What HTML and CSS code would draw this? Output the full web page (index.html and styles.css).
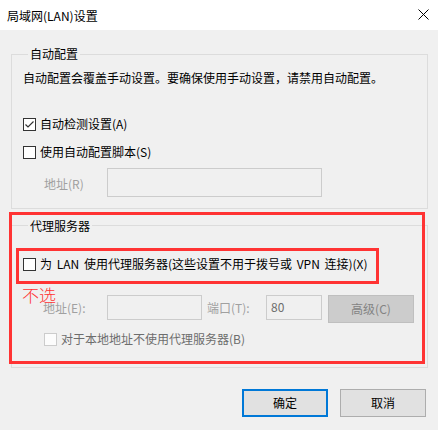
FILE: index.html
```html
<!DOCTYPE html>
<html lang="zh-CN">
<head>
<meta charset="utf-8">
<title>局域网(LAN)设置</title>
<link rel="stylesheet" href="styles.css">
</head>
<body>
<div class="dialog">
  <div class="titlebar">
    <span class="title">局域网(LAN)设置</span>
    <svg class="close" width="11" height="11" viewBox="0 0 11 11"><path d="M0.5 0.5L10.5 10.5M10.5 0.5L0.5 10.5" stroke="#000" stroke-width="1" fill="none"/></svg>
  </div>
  <div class="main">
    <fieldset class="group group-auto">
      <legend>自动配置</legend>
      <p class="desc">自动配置会覆盖手动设置。要确保使用手动设置，请禁用自动配置。</p>
      <div class="check-row">
        <span class="cb checked"><svg width="11" height="11" viewBox="0 0 11 11"><path d="M1.5 5.5L4 8L9.5 2.5" stroke="#333" stroke-width="1.2" fill="none"/></svg></span>
        <span>自动检测设置(A)</span>
      </div>
      <div class="check-row row-script">
        <span class="cb"></span>
        <span>使用自动配置脚本(S)</span>
      </div>
      <div class="addr-row">
        <span class="dim-label addr-label">地址(R)</span>
        <span class="input input-script"></span>
      </div>
    </fieldset>
    <fieldset class="group group-proxy">
      <legend>代理服务器</legend>
      <div class="mark-box">
        <div class="check-row">
          <span class="cb"></span>
          <span class="wide-words">为 LAN 使用代理服务器(这些设置不用于拨号或 VPN 连接)(X)</span>
        </div>
      </div>
      <div class="proxy-row">
        <span class="dim-label proxy-addr-label">地址(E):</span>
        <span class="input input-addr"></span>
        <span class="dim-label port-label">端口(T):</span>
        <span class="input input-port">80</span>
        <span class="btn btn-disabled">高级(C)</span>
      </div>
      <div class="check-row row-bypass disabled">
        <span class="cb cb-disabled"></span>
        <span>对于本地地址不使用代理服务器(B)</span>
      </div>
    </fieldset>
    <div class="footer">
      <span class="btn btn-default">确定</span>
      <span class="btn">取消</span>
    </div>
  </div>
  <div class="annot-frame"></div>
  <div class="annot-text">不选</div>
</div>
</body>
</html>
```
FILE: styles.css
```css
html, body {
  margin: 0;
  padding: 0;
}
body {
  background: #f0f0f0;
  font-family: "Noto Sans CJK SC", "Microsoft YaHei", sans-serif;
  font-size: 12px;
  line-height: 16px;
  color: #000;
}
.dialog {
  position: relative;
  width: 438px;
  height: 430px;
  overflow: hidden;
}
.titlebar {
  height: 30px;
  background: #fff;
  display: flex;
  align-items: center;
  justify-content: space-between;
  padding: 0 9px 0 7px;
  box-sizing: border-box;
}
.title {
  padding-top: 2px;
}
.close {
  display: block;
  margin-top: -1px;
}
.main {
  padding: 16px 10px 0 11px;
}
.group {
  margin: 0;
  border: 1px solid #dcdcdc;
  padding: 8px 10px 11px 11px;
  min-width: 0;
}
.group legend {
  padding: 0 2px;
  margin-left: 5px;
  line-height: 16px;
}
.group-proxy legend {
  line-height: 18px;
  padding-top: 2px;
}
.desc {
  margin: 0 0 30px 0;
}
.check-row {
  display: flex;
  align-items: center;
  gap: 4px;
  height: 16px;
}
.wide-words {
  word-spacing: 2px;
}
.row-script {
  margin-top: 12px;
}
.cb {
  width: 13px;
  height: 13px;
  box-sizing: border-box;
  border: 1px solid #333;
  background: #fff;
  display: flex;
  align-items: center;
  justify-content: center;
  flex: none;
}
.cb svg {
  display: block;
}
.cb-disabled {
  border-color: #cccccc;
  background: #fcfcfc;
}
.disabled {
  color: #6d6d6d;
}
.dim-label {
  color: #a0a0a0;
}
.addr-row {
  display: flex;
  align-items: center;
  margin-top: 8px;
}
.addr-label {
  margin-left: 21px;
  width: 63px;
  padding-top: 3px;
}
.input {
  box-sizing: border-box;
  border: 1px solid #cccccc;
  background: #f0f0f0;
  display: block;
}
.input-script {
  width: 215px;
  height: 29px;
}
.group-proxy {
  margin-top: 6px;
  padding: 13px 10px 20px 11px;
}
.mark-box {
  margin-left: -7px;
  width: 363px;
  height: 36px;
  box-sizing: border-box;
  border: 3px solid #ff3333;
  padding: 5px 0 0 4px;
}
.proxy-row {
  display: flex;
  align-items: flex-start;
  margin-top: 11px;
}
.proxy-row .dim-label {
  line-height: 25px;
}
.proxy-addr-label {
  margin-left: 20px;
  width: 64px;
}
.input-addr {
  width: 95px;
  height: 25px;
  margin-right: 5px;
}
.port-label {
  width: 59px;
}
.input-port {
  width: 56px;
  height: 25px;
  padding: 3px 0 0 4px;
  color: #6d6d6d;
  line-height: 16px;
}
.btn {
  box-sizing: border-box;
  width: 86px;
  height: 28px;
  border: 1px solid #adadad;
  background: #e1e1e1;
  display: flex;
  align-items: center;
  justify-content: center;
}
.btn-disabled {
  margin-left: 6px;
  background: #cccccc;
  border-color: #bfbfbf;
  color: #838383;
}
.row-bypass {
  margin-top: 8px;
  padding-left: 21px;
}
.footer {
  display: flex;
  justify-content: flex-end;
  gap: 12px;
  margin-top: 21px;
  padding-right: 2px;
}
.btn-default {
  border: 2px solid #0078d7;
}
.annot-frame {
  position: absolute;
  left: 9px;
  top: 212px;
  width: 416px;
  height: 152px;
  box-sizing: border-box;
  border: 3px solid #ff3333;
}
.annot-text {
  position: absolute;
  left: 22px;
  top: 286px;
  font-size: 17px;
  line-height: 18px;
  font-weight: 300;
  color: #ff3333;
}
```
